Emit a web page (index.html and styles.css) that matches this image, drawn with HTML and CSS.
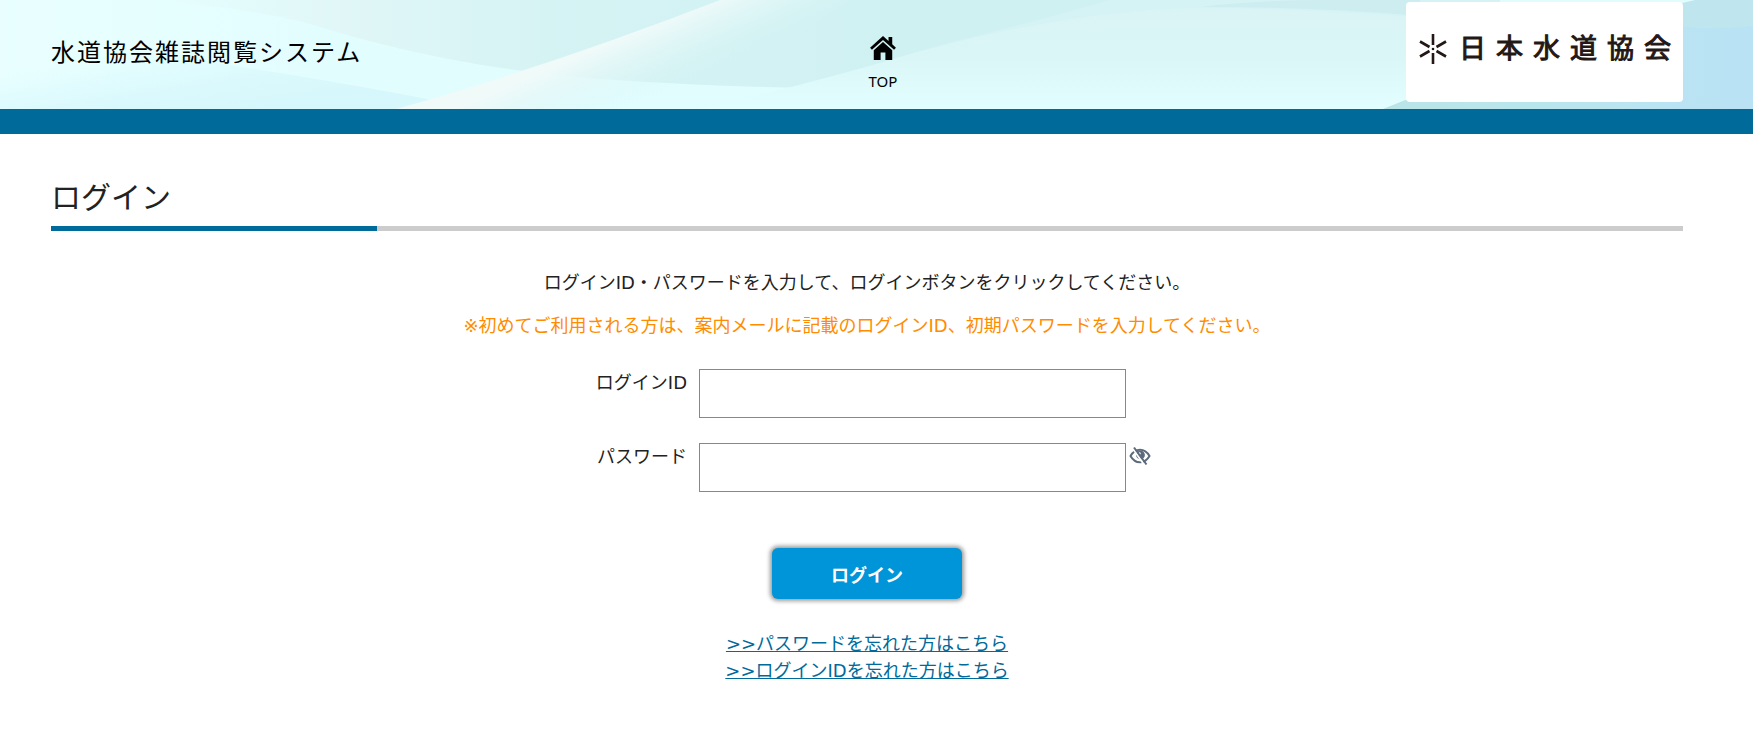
FILE: index.html
```html
<!DOCTYPE html>
<html lang="ja">
<head>
    <meta charset="UTF-8">
    <meta name="viewport" content="width=device-width, initial-scale=1.0">
    <title>水道協会雑誌閲覧システム</title>
    <link rel="stylesheet" href="styles.css">
</head>
<body>
    <header class="header">
        <svg class="header-bg" viewBox="0 0 1753 109" preserveAspectRatio="none" aria-hidden="true">
            <defs>
                <linearGradient id="base" x1="0" y1="0" x2="1" y2="0">
                    <stop offset="0" stop-color="#e9ffff"/>
                    <stop offset="0.2" stop-color="#e2fdfe"/>
                    <stop offset="1" stop-color="#e0fcfd"/>
                </linearGradient>
                <linearGradient id="low" gradientUnits="userSpaceOnUse" x1="230" y1="40" x2="240" y2="109">
                    <stop offset="0" stop-color="#d9f9fc" stop-opacity="0"/>
                    <stop offset="0.6" stop-color="#d8f8fc" stop-opacity="0.8"/>
                    <stop offset="1" stop-color="#d6f7fb"/>
                </linearGradient>
                <linearGradient id="dark" gradientUnits="userSpaceOnUse" x1="150" y1="0" x2="950" y2="0">
                    <stop offset="0" stop-color="#e6f9fa" stop-opacity="0"/>
                    <stop offset="0.25" stop-color="#e0f6f7"/>
                    <stop offset="0.5" stop-color="#d6f3f4"/>
                    <stop offset="1" stop-color="#cff1f2"/>
                </linearGradient>
                <linearGradient id="streak" gradientUnits="userSpaceOnUse" x1="590" y1="52" x2="616" y2="112">
                    <stop offset="0" stop-color="#effaf9"/>
                    <stop offset="0.3" stop-color="#e6f8f8" stop-opacity="0.8"/>
                    <stop offset="1" stop-color="#d8f5f5" stop-opacity="0"/>
                </linearGradient>
                <linearGradient id="veil" x1="0" y1="0" x2="0" y2="1">
                    <stop offset="0" stop-color="#daf4f5"/>
                    <stop offset="0.5" stop-color="#daf6f7"/>
                    <stop offset="1" stop-color="#e2fefe"/>
                </linearGradient>
                <linearGradient id="right" gradientUnits="userSpaceOnUse" x1="1400" y1="60" x2="1753" y2="90">
                    <stop offset="0" stop-color="#b9e5e8"/>
                    <stop offset="0.6" stop-color="#bae5f0"/>
                    <stop offset="1" stop-color="#b9e2f5"/>
                </linearGradient>
            </defs>
            <rect width="1753" height="109" fill="url(#base)"/>
            <path d="M0 40 Q160 50 228 65 Q340 82 432 100 L470 109 H0Z" fill="url(#low)"/>
            <path d="M150 0 Q250 8 310 24 Q450 68 600 79 Q760 90 900 88 L1300 60 V0Z" fill="url(#dark)"/>
            <path d="M396 109 Q550 66 720 0 H850 Q760 60 640 109Z" fill="url(#streak)"/>
            <path d="M780 100 Q860 66 960 40 Q1040 20 1110 0 H1500 V109Z" fill="#d5f3f4"/>
            <path d="M700 109 Q800 86 890 60 Q1060 10 1200 8 Q1320 8 1500 24 V109Z" fill="url(#veil)"/>
            <path d="M1200 7 Q1320 7 1420 16 V0 H1330 Q1260 0 1200 7Z" fill="#cdedf0"/>
            <path d="M1383 109 Q1550 40 1700 0 H1753 V109Z" fill="url(#right)"/>
            <path d="M1670 6 L1695 0 H1753 V26 Q1710 30 1670 26Z" fill="#bfe6ee"/>
        </svg>
        <h1 class="site-title">水道協会雑誌閲覧システム</h1>
        <nav class="nav">
            <a class="nav-link" href="#">
                <svg class="home-icon" viewBox="0 0 28 26" aria-hidden="true">
                    <path d="M14 0 L20 5.4 V1 H24 V9 L28 12.6 L26 15 L14 4.4 L2 15 L0 12.6Z"/>
                    <path d="M14 6.6 L24 15.4 V26 H16.6 V18 H11.4 V26 H4 V15.4Z"/>
                </svg>
                <span>TOP</span>
            </a>
        </nav>
        <a class="logo" href="#">
            <svg class="logo-mark" viewBox="0 0 28 30" aria-hidden="true">
                <path d="M14 0V11M14 19V30M1 7.5L10.5 13M17.5 17L27 22.5M27 7.5L17.5 13M10.5 17L1 22.5"/>
                <circle cx="14" cy="15" r="1.3"/>
            </svg>
            <span class="logo-text">日本水道協会</span>
        </a>
    </header>
    <div class="bar"></div>

    <main class="main">
        <h2 class="page-title">ログイン</h2>
        <p class="guide">ログインID・パスワードを入力して、ログインボタンをクリックしてください。</p>
        <p class="guide notice">※初めてご利用される方は、案内メールに記載のログインID、初期パスワードを入力してください。</p>
        <form class="login-form" action="/login" method="POST">
            <div class="row">
                <label for="login-id">ログインID</label>
                <input type="text" id="login-id" name="login_id">
            </div>
            <div class="row">
                <label for="password">パスワード</label>
                <input type="password" id="password" name="password">
                <button type="button" class="toggle" id="toggle" aria-label="パスワードを表示">
                    <svg viewBox="0 0 22 20" aria-hidden="true">
                        <path class="eye" d="M1.5 10C4 5.6 7 3.7 11 3.7S18 5.6 20.5 10C18 14.4 15 16.3 11 16.3S4 14.4 1.5 10Z"/>
                        <circle cx="11.5" cy="9" r="4.4"/>
                        <circle class="pupil" cx="10.5" cy="7.5" r="1.2"/>
                        <path class="gap" d="M3.5 2L16 20"/>
                        <path class="slash" d="M5 1.5L17.5 18.5"/>
                    </svg>
                </button>
            </div>
            <button type="submit" class="submit">ログイン</button>
        </form>
        <div class="links">
            <a href="#">&gt;&gt;パスワードを忘れた方はこちら</a>
            <a href="#">&gt;&gt;ログインIDを忘れた方はこちら</a>
        </div>
    </main>
    <script>
        document.getElementById('toggle').onclick = function() {
            const password = document.getElementById('password');
            password.type = password.type === 'password' ? 'text' : 'password';
        };
    </script>
</body>
</html>
```
FILE: styles.css
```css
* {
    box-sizing: border-box;
}
body {
    margin: 0;
    font-family: "DejaVu Sans", "Noto Sans CJK JP", sans-serif;
    font-size: 18px;
    line-height: 27px;
    color: #222;
    background-color: #fff;
}
.header {
    position: relative;
    display: grid;
    grid-template-columns: 1fr auto 1fr;
    align-items: start;
    padding: 2px 70px 7px 51px;
}
.header-bg {
    position: absolute;
    top: 0;
    left: 0;
    z-index: -1;
    width: 100%;
    height: 100%;
}
.site-title {
    margin: 33px 0 0;
    font-size: 24px;
    line-height: 36px;
    font-weight: normal;
    letter-spacing: 2px;
    color: #000;
}
.nav {
    padding: 34px 0 0 32px;
}
.nav-link {
    display: flex;
    flex-direction: column;
    align-items: center;
    gap: 8px;
    font-family: "Noto Sans", sans-serif;
    font-size: 15px;
    color: #000;
    text-decoration: none;
}
.home-icon {
    width: 28px;
    height: 24px;
}
.logo {
    display: flex;
    align-items: center;
    justify-self: end;
    gap: 12px;
    width: 277px;
    height: 100px;
    padding: 0 0 7px 13px;
    border-radius: 4px;
    background-color: #fff;
    color: #231815;
    text-decoration: none;
}
.logo-mark {
    width: 28px;
    height: 30px;
    fill: #231815;
    stroke: #231815;
    stroke-width: 2.6;
}
.logo-mark circle {
    stroke: none;
}
.logo-text {
    font-size: 27px;
    letter-spacing: 10px;
    white-space: nowrap;
    -webkit-text-stroke: 1px #231815;
}
.bar {
    height: 25px;
    background-color: #006a9a;
}
.main {
    padding: 41px 70px 60px 51px;
}
.page-title {
    margin: 0 0 38px;
    padding-bottom: 6px;
    border-bottom: 5px solid;
    border-image: linear-gradient(to right, #006a9a 20%, #ccc 20%) 1;
    font-size: 30px;
    line-height: 45px;
    font-weight: normal;
}
.guide {
    margin: 0 0 16px;
    text-align: center;
}
.notice {
    margin-bottom: 30px;
    color: #ff8c00;
}
.login-form {
    display: flex;
    flex-direction: column;
    align-items: center;
    gap: 25px;
}
.row {
    display: grid;
    grid-template-columns: 116px 427px 25px;
    align-items: start;
}
.row label {
    padding-right: 12px;
    text-align: right;
}
.row input {
    height: 49px;
    padding: 0 12px;
    border: 1px solid #85888c;
    font-size: 18px;
}
.toggle {
    padding: 3px 0 0 3px;
    border: none;
    background: none;
    line-height: 0;
    cursor: pointer;
}
.toggle svg {
    width: 22px;
    height: 20px;
    fill: #5c6b7c;
}
.toggle .eye {
    fill: none;
    stroke: #5c6b7c;
    stroke-width: 2;
}
.toggle .pupil {
    fill: #fff;
}
.toggle .gap {
    stroke: #fff;
    stroke-width: 2;
}
.toggle .slash {
    stroke: #5c6b7c;
    stroke-width: 2;
}
.submit {
    width: 190px;
    height: 51px;
    margin-top: 31px;
    border: none;
    border-radius: 6px;
    background-color: #0095d9;
    box-shadow: 0 0 4px 2px #999;
    color: #fff;
    font-family: inherit;
    font-size: 18px;
    font-weight: bold;
    cursor: pointer;
}
.submit:hover {
    background-color: #007fb9;
}
.links {
    display: flex;
    flex-direction: column;
    align-items: center;
    margin-top: 31px;
}
.links a {
    color: #006a9a;
}
```
